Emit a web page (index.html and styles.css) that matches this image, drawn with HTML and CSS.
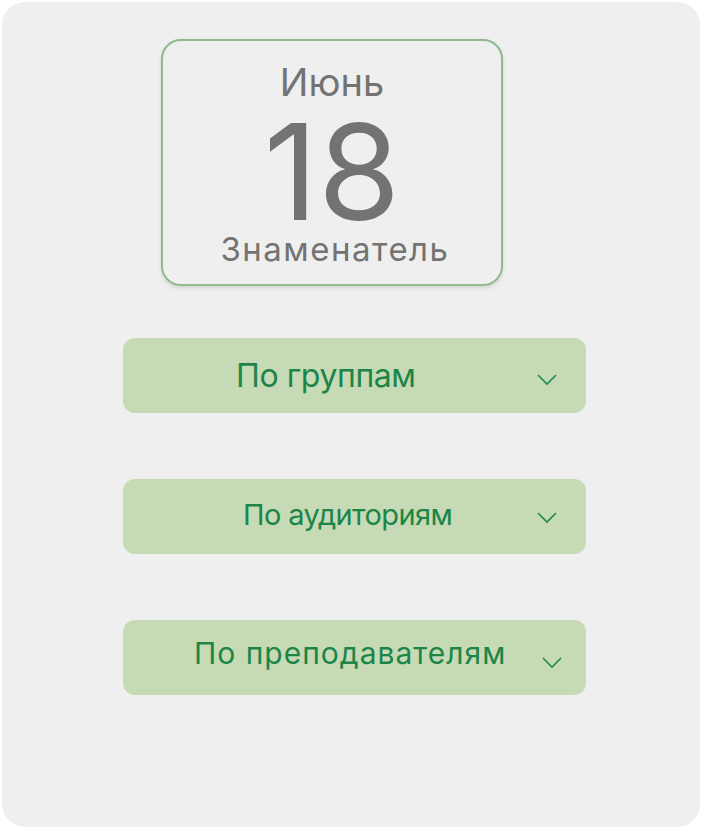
FILE: index.html
```html
<!DOCTYPE html>
<html lang="ru">
<head>
<meta charset="utf-8">
<link rel="stylesheet" href="styles.css">
</head>
<body>
<div class="panel">
  <div class="date-card">
    <div class="month">Июнь</div>
    <div class="day">18</div>
    <div class="week">Знаменатель</div>
  </div>
  <div class="menu">
    <div class="select select-groups">
      <span class="label">По группам</span>
      <svg class="chev" width="20" height="12" viewBox="0 0 20 12"><path d="M1 1 L10 10 L19 1" fill="none" stroke="#1f8a4c" stroke-width="1.6"/></svg>
    </div>
    <div class="select select-rooms">
      <span class="label">По аудиториям</span>
      <svg class="chev" width="20" height="12" viewBox="0 0 20 12"><path d="M1 1 L10 10 L19 1" fill="none" stroke="#1f8a4c" stroke-width="1.6"/></svg>
    </div>
    <div class="select select-teachers">
      <span class="label">По преподавателям</span>
      <svg class="chev" width="20" height="12" viewBox="0 0 20 12"><path d="M1 1 L10 10 L19 1" fill="none" stroke="#1f8a4c" stroke-width="1.6"/></svg>
    </div>
  </div>
</div>
</body>
</html>
```
FILE: styles.css
```css
html, body {
  margin: 0;
  padding: 0;
  background: #ffffff;
}
body {
  padding: 3px;
  font-family: Inter, "Noto Sans", sans-serif;
}
.panel {
  box-sizing: border-box;
  width: 696px;
  height: 823px;
  background: #efefef;
  border-radius: 22px;
  box-shadow: 0 0 2px rgba(0,0,0,0.18);
  display: flex;
  flex-direction: column;
  align-items: center;
  padding-top: 36px;
}
.date-card {
  box-sizing: border-box;
  width: 342px;
  height: 247px;
  margin-right: 38px;
  border: 2px solid #8fba8e;
  border-radius: 20px;
  box-shadow: 0 2px 4px rgba(0,0,0,0.12);
  display: flex;
  flex-direction: column;
  align-items: center;
  color: #737373;
}
.month {
  font-size: 38px;
  line-height: 46px;
  margin-top: 17.5px;
}
.day {
  font-size: 133px;
  line-height: 110px;
  margin-top: 12px;
}
.week {
  font-size: 33px;
  line-height: 40px;
  letter-spacing: 1.5px;
  margin-top: 2px;
  margin-left: 6px;
}
.menu {
  display: flex;
  flex-direction: column;
  gap: 66px;
  margin-top: 52px;
  margin-left: 7px;
}
.select {
  box-sizing: border-box;
  width: 463px;
  height: 75px;
  background: #c6dab6;
  border-radius: 12px;
  position: relative;
  color: #1c8547;
}
.label {
  position: absolute;
  line-height: 75px;
  white-space: nowrap;
}
.select-groups .label { left: 113px; top: -0.5px; font-size: 32px; letter-spacing: -0.4px; }
.select-rooms .label { left: 120px; top: -2.5px; font-size: 29px; letter-spacing: -0.6px; }
.select-teachers .label { left: 71px; top: -4px; font-size: 30px; letter-spacing: 1px; }
.chev {
  position: absolute;
}
.select-groups .chev { left: 414px; top: 36px; }
.select-rooms .chev { left: 414px; top: 33px; }
.select-teachers .chev { left: 419px; top: 37px; }
```
